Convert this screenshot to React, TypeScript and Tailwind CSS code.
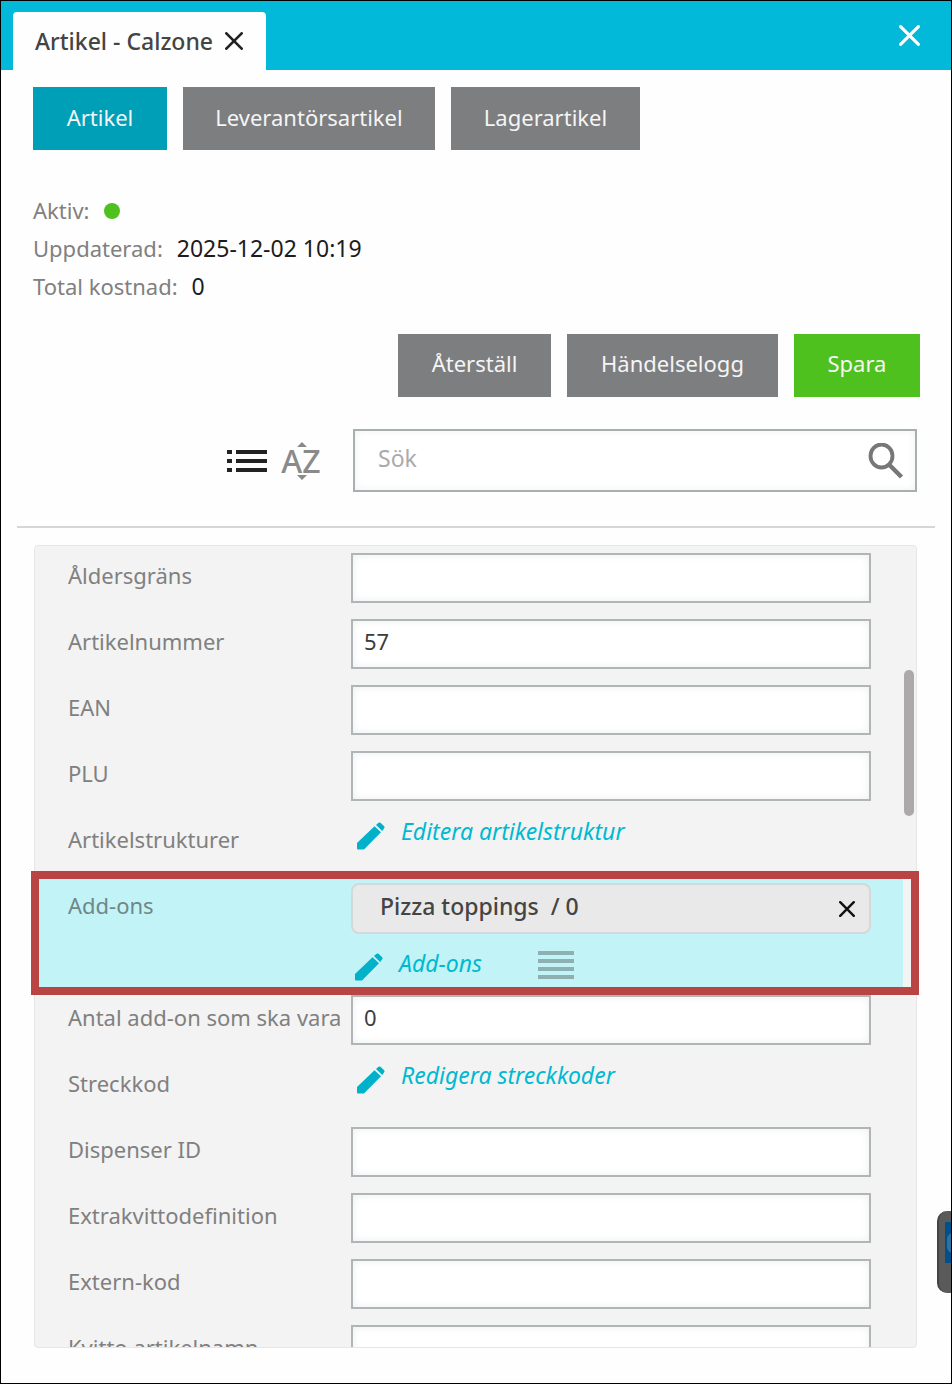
import React, { useState } from 'react';

interface IconProps {
  className?: string;
}

const CrossIcon: React.FC<IconProps> = ({ className }) => (
  <svg viewBox="0 0 20 20" className={className} fill="none" stroke="currentColor" strokeLinecap="round" aria-hidden="true">
    <path d="M1.5 1.5 18.5 18.5M18.5 1.5 1.5 18.5" />
  </svg>
);

const PencilIcon: React.FC<IconProps> = ({ className }) => (
  <svg viewBox="0 0 28 28" className={className} fill="currentColor" aria-hidden="true">
    <path d="M0 21 17.5 4.2 24 10.2 7 27.5H1Q0 27.5 0 26.5Z" />
    <path d="M19 3 21.5.8Q22.5 0 23.5.8L27.2 4.3Q28 5.3 27.2 6.3L25.2 9Z" />
  </svg>
);

const SearchIcon: React.FC<IconProps> = ({ className }) => (
  <svg viewBox="0 0 36 36" className={className} fill="none" stroke="currentColor" aria-hidden="true">
    <ellipse cx="13.5" cy="13" rx="11" ry="11.5" strokeWidth="3.8" />
    <path d="M21.5 22 33.5 34" strokeWidth="4.4" />
  </svg>
);

const ListIcon: React.FC<IconProps> = ({ className }) => (
  <svg viewBox="0 0 40 22" className={className} fill="currentColor" aria-hidden="true">
    <path d="M0 0h5v4H0zM9 0h31v4H9zM0 9h5v4H0zM9 9h31v4H9zM0 18h5v4H0zM9 18h31v4H9z" />
  </svg>
);

const LinesIcon: React.FC<IconProps> = ({ className }) => (
  <svg viewBox="0 0 36 28" className={className} fill="currentColor" aria-hidden="true">
    <path d="M0 0h36v4H0zM0 8h36v4H0zM0 16h36v4H0zM0 24h36v4H0z" />
  </svg>
);

interface FieldProps {
  id: string;
  label: string;
  initial?: string;
}

const Field: React.FC<FieldProps> = ({ id, label, initial = '' }) => {
  const [value, setValue] = useState(initial);

  return (
    <div className="flex h-[66px] shrink-0 pt-[7px]">
      <label htmlFor={id} className="w-[283px] shrink-0 whitespace-nowrap leading-[44px]">
        {label}
      </label>
      <input
        id={id}
        type="text"
        value={value}
        onChange={(e) => setValue(e.target.value)}
        className="h-[50px] min-w-0 flex-1 border-2 border-[#b0b6b8] bg-white px-[11px] pb-[6px] text-[#3c3c3c] shadow-[inset_0_0_8px_rgba(0,0,0,0.07)] focus:outline-none"
      />
    </div>
  );
};

interface LinkRowProps {
  label: string;
  link: string;
}

const LinkRow: React.FC<LinkRowProps> = ({ label, link }) => (
  <div className="flex h-[66px] shrink-0 pt-[7px]">
    <span className="w-[283px] shrink-0 leading-[44px]">{label}</span>
    <a href="#" className="flex items-start gap-4 pl-[6px] text-[23px] italic text-[#00b9d1]">
      <PencilIcon className="mt-[5px] h-7 w-7 text-[#00b1c9]" />
      <span className="leading-7">{link}</span>
    </a>
  </div>
);

const App: React.FC = () => {
  const [search, setSearch] = useState('');

  return (
    <div className="relative flex h-screen flex-col overflow-hidden border border-black bg-[#fefefe] font-['Noto_Sans','Open_Sans',sans-serif] text-[22px] text-[#808080]">
      <header className="flex h-[69px] shrink-0 items-end justify-between bg-[#02b9d9] pl-3 pr-[31px]">
        <div className="flex h-[58px] w-[253px] items-center gap-3 rounded-t-[4px] bg-[#fefefe] pl-[22px] text-[23px] font-medium text-[#444]">
          <h1 className="whitespace-nowrap">Artikel - Calzone</h1>
          <button type="button" aria-label="Stäng flik">
            <CrossIcon className="h-[18px] w-[18px] stroke-[3] text-[#222]" />
          </button>
        </div>
        <button type="button" aria-label="Stäng" className="mb-6 text-white">
          <CrossIcon className="h-[21px] w-[21px] stroke-[3]" />
        </button>
      </header>

      <nav className="mt-[17px] flex shrink-0 gap-4 pl-8 text-[#f5f5f5]">
        <button type="button" className="h-[63px] w-[134px] bg-[#009fb8] pb-[2px]">Artikel</button>
        <button type="button" className="h-[63px] w-[252px] bg-[#7d7e80] pb-[2px]">Leverantörsartikel</button>
        <button type="button" className="h-[63px] w-[189px] bg-[#7d7e80] pb-[2px]">Lagerartikel</button>
      </nav>

      <dl className="mt-[41px] shrink-0 pl-8 leading-[38px]">
        <div className="flex items-center gap-[14px]">
          <dt>Aktiv:</dt>
          <dd className="mt-[2px] h-4 w-4 rounded-full bg-[#4fc11f]" aria-label="Ja" />
        </div>
        <div className="flex gap-[14px]">
          <dt>Uppdaterad:</dt>
          <dd className="text-[23px] text-[#1c1c1c]">2025-12-02 10:19</dd>
        </div>
        <div className="flex gap-[14px]">
          <dt>Total kostnad:</dt>
          <dd className="text-[23px] text-[#1c1c1c]">0</dd>
        </div>
      </dl>

      <div className="mt-[29px] flex shrink-0 justify-end gap-4 pr-[31px] text-[#f5f5f5]">
        <button type="button" className="h-[63px] w-[153px] bg-[#7d7e80] pb-1">Återställ</button>
        <button type="button" className="h-[63px] w-[211px] bg-[#7d7e80] pb-1">Händelselogg</button>
        <button type="button" className="h-[63px] w-[126px] bg-[#4fc11f] pb-1">Spara</button>
      </div>

      <div className="mt-8 flex shrink-0 items-center pl-[226px] pr-[34px]">
        <button type="button" aria-label="Lista">
          <ListIcon className="h-[22px] w-10 text-[#222]" />
        </button>
        <button type="button" aria-label="Sortera A till Z" className="relative ml-[14px] w-10 text-[32px] font-medium leading-9 text-[#8a8a8a]">
          AZ
          <svg viewBox="0 0 10 40" className="absolute left-4 -top-0.5 h-10 w-[10px]" fill="currentColor" aria-hidden="true">
            <path d="M0 6 5 1 10 6zM0 34 5 39 10 34z" />
          </svg>
        </button>
        <div className="ml-8 flex h-[63px] min-w-0 flex-1 items-center border-2 border-[#a9aeb0] bg-white pl-[23px] pr-[11px] shadow-[inset_0_0_8px_rgba(0,0,0,0.06)]">
          <input
            type="text"
            aria-label="Sök"
            placeholder="Sök"
            value={search}
            onChange={(e) => setSearch(e.target.value)}
            className="min-w-0 flex-1 bg-transparent pb-1 text-[23px] placeholder:text-[#aaa] focus:outline-none"
          />
          <button type="button" aria-label="Starta sökning">
            <SearchIcon className="h-9 w-9 text-[#777]" />
          </button>
        </div>
      </div>

      <hr className="mx-4 mt-[34px] shrink-0 border-t-2 border-[#d6d6d6]" />

      <section className="relative mb-[35px] ml-[33px] mr-[34px] mt-[17px] min-h-0 flex-1">
        <div className="h-full overflow-hidden rounded-[4px] border border-[#e6e6e6] bg-[#f3f3f3]">
          <div className="flex flex-col pl-[33px] pr-[45px]">
            <Field id="age-limit" label="Åldersgräns" />
            <Field id="article-number" label="Artikelnummer" initial="57" />
            <Field id="ean" label="EAN" />
            <Field id="plu" label="PLU" />
            <LinkRow label="Artikelstrukturer" link="Editera artikelstruktur" />

            <div className="-ml-[33px] -mr-8 flex h-28 shrink-0 bg-[#c2f3f6] pl-[33px] pr-8 pt-[7px]">
              <span className="w-[283px] shrink-0 leading-[44px] text-[#6f8788]">Add-ons</span>
              <div className="min-w-0 flex-1">
                <div className="flex h-[51px] items-center justify-between rounded-[8px] border-2 border-[#d3d8d9] bg-[#e9e9e9] pl-[27px] pr-[14px]">
                  <span className="whitespace-pre pb-1 text-[23px] font-medium text-[#444]">Pizza toppings  / 0</span>
                  <button type="button" aria-label="Ta bort Pizza toppings">
                    <CrossIcon className="h-4 w-4 stroke-[3] text-[#111]" />
                  </button>
                </div>
                <div className="mt-[14px] flex items-start">
                  <a href="#" className="flex items-start gap-4 pl-1 text-[23px] italic text-[#00b9d1]">
                    <PencilIcon className="mt-[5px] h-7 w-7 text-[#00b1c9]" />
                    <span className="leading-[30px]">Add-ons</span>
                  </a>
                  <button type="button" aria-label="Ordna add-ons" className="ml-14 mt-[3px]">
                    <LinesIcon className="h-7 w-9 text-[#8fb0b3]" />
                  </button>
                </div>
              </div>
            </div>

            <Field id="add-on-count" label="Antal add-on som ska vara" initial="0" />
            <LinkRow label="Streckkod" link="Redigera streckkoder" />
            <Field id="dispenser-id" label="Dispenser ID" />
            <Field id="receipt-definition" label="Extrakvittodefinition" />
            <Field id="external-code" label="Extern-kod" />
            <Field id="receipt-name" label="Kvitto artikelnamn" />
          </div>
        </div>

        {/* scroll thumb */}
        <div className="absolute right-[3px] top-[125px] h-[146px] w-[10px] rounded-full bg-[#aca9aa]" />
        {/* marker around the add-ons row */}
        <div className="pointer-events-none absolute -left-[3px] -right-[2px] top-[326px] h-[124px] border-8 border-[#b94444]" />
      </section>

      {/* docked side widget, cut off by the window edge */}
      <div className="absolute right-0 top-[1210px] flex h-[82px] w-[14px] justify-end rounded-l-[10px] border-l-2 border-[#444] bg-[#5a5a5a] pt-[11px]">
        <div className="flex h-[41px] w-[6px] items-center justify-end overflow-hidden bg-[#00508c]">
          <span className="-mr-2 h-5 w-3 shrink-0 rounded-full bg-[#2f719f]" />
        </div>
      </div>
    </div>
  );
};

export default App;
